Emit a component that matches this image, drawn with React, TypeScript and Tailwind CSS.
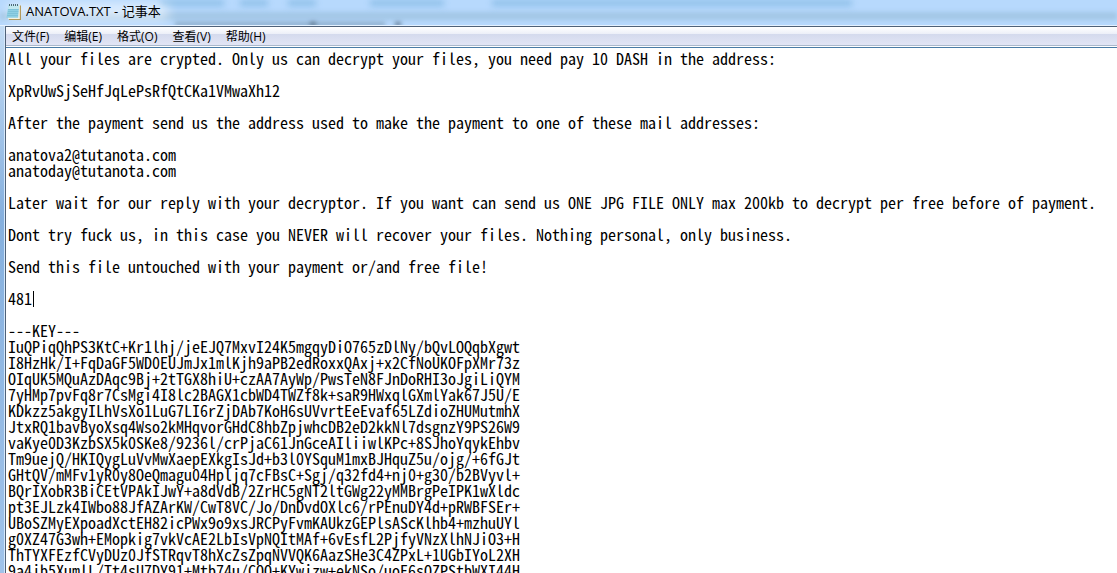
import { useState } from "react";

const NOTE = `All your files are crypted. Only us can decrypt your files, you need pay 10 DASH in the address:

XpRvUwSjSeHfJqLePsRfQtCKa1VMwaXh12

After the payment send us the address used to make the payment to one of these mail addresses:

anatova2@tutanota.com
anatoday@tutanota.com

Later wait for our reply with your decryptor. If you want can send us ONE JPG FILE ONLY max 200kb to decrypt per free before of payment.

Dont try fuck us, in this case you NEVER will recover your files. Nothing personal, only business.

Send this file untouched with your payment or/and free file!

481

---KEY---
IuQPiqQhPS3KtC+Kr1lhj/jeEJQ7MxvI24K5mgqyDiO765zDlNy/bQvLOQqbXgwt
I8HzHk/I+FqDaGF5WD0EUJmJx1mlKjh9aPB2edRoxxQAxj+x2CfNoUKOFpXMr73z
OIqUK5MQuAzDAqc9Bj+2tTGX8hiU+czAA7AyWp/PwsTeN8FJnDoRHI3oJgiLiQYM
7yHMp7pvFq8r7CsMgi4I8lc2BAGX1cbWD4TWZf8k+saR9HWxqlGXmlYak67J5U/E
KDkzz5akgyILhVsXo1LuG7LI6rZjDAb7KoH6sUVvrtEeEvaf65LZdioZHUMutmhX
JtxRQ1bavByoXsq4Wso2kMHqvorGHdC8hbZpjwhcDB2eD2kkNl7dsgnzY9PS26W9
vaKye0D3KzbSX5k0SKe8/9236l/crPjaC61JnGceAIliiwlKPc+8SJhoYqykEhbv
Tm9uejQ/HKIQygLuVvMwXaepEXkgIsJd+b3l0YSquM1mxBJHquZ5u/ojg/+6fGJt
GHtQV/mMFv1yR0y8OeQmagu04Hpljq7cFBsC+Sgj/q32fd4+nj0+g30/b2BVyvl+
BQrIXobR3BiCEtVPAkIJwY+a8dVdB/2ZrHC5gNT2ltGWg22yMMBrgPeIPK1wXldc
pt3EJLzk4IWbo88JfAZArKW/CwT8VC/Jo/DnDvdOXlc6/rPEnuDY4d+pRWBFSEr+
UBoSZMyEXpoadXctEH82icPWx9o9xsJRCPyFvmKAUkzGEPlsAScKlhb4+mzhuUYl
g0XZ47G3wh+EMopkig7vkVcAE2LbIsVpNQItMAf+6vEsfL2PjfyVNzXlhNJiO3+H
ThTYXFEzfCVyDUz0JfSTRqvT8hXcZsZpqNVVQK6AazSHe3C4ZPxL+1UGbIYoL2XH
9a4jb5XumlL/Tt4sU7DY91+Mtb74u/CQQ+KYwjzw+ekNSo/uoE6sQZPStbWXI44H`;

const MENUS = ["文件(F)", "编辑(E)", "格式(O)", "查看(V)", "帮助(H)"];

function NotepadIcon() {
  return (
    <svg width="16" height="18" viewBox="0 0 16 18" aria-hidden="true">
      <path d="M3.5 2.5H15V17H3z" fill="#b39a5c" />
      <path d="M3 2h10.8v14H2z" fill="#f4f3e4" />
      <path d="M2.5 2h10.6l-.9 12.8H.4z" fill="#8fd0e4" />
      <path d="M2.5 2h10.6l-.3 4H2z" fill="#c2e8f0" />
      <path d="M2.2 6.5h10.3M2 8.5h10.3M1.6 10.5h10.5M1.2 12.5h10.8" stroke="#7fc3d9" strokeWidth="1" />
      <path d="M3.5 1v2M5.5 1v2M7.5 1v2M9.5 1v2M11.5 1v2" stroke="#4d6a76" strokeWidth="1" />
    </svg>
  );
}

function GlassReflections() {
  return (
    <div className="pointer-events-none absolute inset-0 overflow-hidden" aria-hidden="true">
      <div className="absolute top-3 left-0 h-2 w-full bg-[#a3c7e6] blur-[2px]" />
      <div className="absolute top-0 left-40 h-1.5 w-16 bg-[#8dbfe8] blur-[3px]" />
      <div className="absolute top-0 left-60 h-1.5 w-7 bg-[#8dbfe8] blur-[3px]" />
      <div className="absolute top-0 left-[288px] h-1.5 w-7 bg-[#8dbfe8] blur-[3px]" />
      <div className="absolute top-0 left-[370px] h-1.5 w-[74px] bg-[#8dbfe8] blur-[3px]" />
      <div className="absolute top-0 left-[492px] h-1.5 w-[360px] bg-[#8dbfe8] blur-[3px]" />
      <div className="absolute top-[22px] left-[175px] h-1 w-[210px] bg-[#8aa9c6] blur-[2px]" />
      <div className="absolute top-[22px] left-[310px] h-1 w-1.5 bg-[#5d7790] blur-[2px]" />
      <div className="absolute top-[22px] left-[395px] h-1 w-1.5 bg-[#5d7790] blur-[2px]" />
      <div className="absolute top-1 left-2 h-4 w-40 bg-white/60 blur-[6px]" />
    </div>
  );
}

export default function App() {
  const [text, setText] = useState(NOTE);
  return (
    <div className="flex h-screen flex-col overflow-hidden bg-[#b7d9fd]">
      <header className="relative flex h-[25px] shrink-0 items-start pt-[3px] pl-1.5">
        <GlassReflections />
        <div className="relative flex items-start gap-1">
          <NotepadIcon />
          <h1 className="font-['Open_Sans','Noto_Sans_CJK_SC',sans-serif] text-[13px] leading-4 text-black">
            ANATOVA.TXT - 记事本
          </h1>
        </div>
      </header>
      <div className="flex min-h-0 flex-1 border-t border-[#e4f1ff] bg-linear-to-b from-[#c3dcf5] via-[#86b0de] via-35% to-[#a0c3ea] pl-1">
        <div className="flex min-w-0 flex-1 border-l border-[#d5e8fb]">
          <div className="flex min-w-0 flex-1 flex-col border-t border-l border-[#4f6178] bg-white">
            <nav className="flex h-[19px] shrink-0 items-end gap-[15px] border-b border-[#a9b8cc] bg-[linear-gradient(to_bottom,#ffffff_0px,#eceff8_7px,#d4daed_7px,#e2e5f5_18px)] pl-1.5">
              {MENUS.map((m) => (
                <button
                  key={m}
                  type="button"
                  className="font-['Open_Sans','Noto_Sans_CJK_SC',sans-serif] text-[12px] leading-4 text-black"
                >
                  {m}
                </button>
              ))}
            </nav>
            <main className="relative mt-px flex min-h-0 flex-1 border-t border-[#4a7ba6]">
              <textarea
                aria-label="Text editor"
                wrap="off"
                spellCheck={false}
                value={text}
                onChange={(e) => setText(e.target.value)}
                className="block w-full resize-none overflow-hidden bg-white pt-0.5 pl-0.5 font-['Noto_Sans_Mono_CJK_SC','Liberation_Mono',monospace] text-[16px] leading-4 font-light text-black outline-none"
              />
              <div className="pointer-events-none absolute top-[243px] left-[27px] h-4 w-px bg-black" />
            </main>
          </div>
        </div>
      </div>
    </div>
  );
}
